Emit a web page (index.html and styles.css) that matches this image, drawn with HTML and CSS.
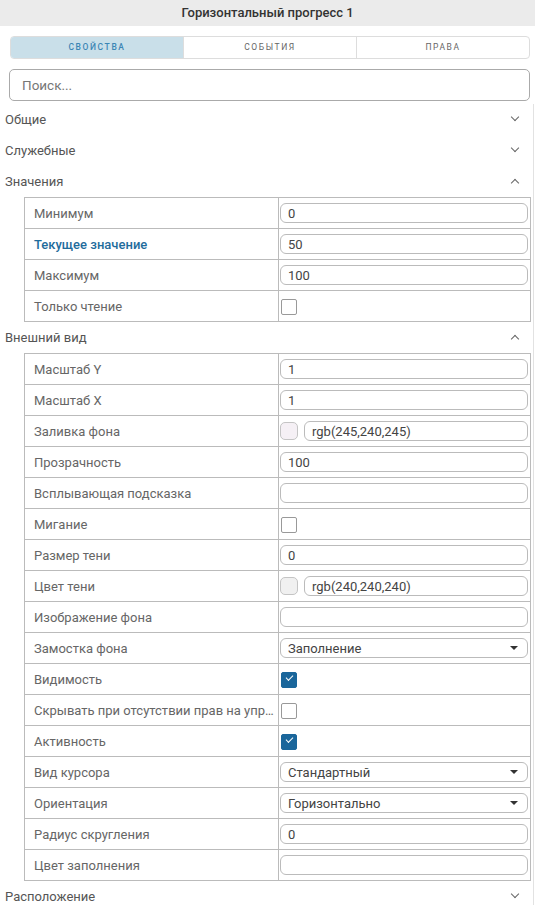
FILE: index.html
```html
<!DOCTYPE html>
<html lang="ru">
<head>
    <meta charset="UTF-8">
    <meta name="viewport" content="width=device-width, initial-scale=1.0">
    <title>Свойства</title>
    <link rel="stylesheet" href="styles.css">
</head>
<body>
    <div class="panel">
        <div class="panel-title">Горизонтальный прогресс 1</div>
        <div class="tabs">
            <div class="tab active">Свойства</div>
            <div class="tab">События</div>
            <div class="tab">Права</div>
        </div>
        <div class="search">
            <input type="text" placeholder="Поиск...">
        </div>
        <div class="groups">
            <div class="group-head">Общие <span class="chev down"></span></div>
            <div class="group-head">Служебные <span class="chev down"></span></div>
            <div class="group-head">Значения <span class="chev up"></span></div>
            <table class="props">
                <tr><td>Минимум</td><td><div class="field">0</div></td></tr>
                <tr><td class="accent">Текущее значение</td><td><div class="field">50</div></td></tr>
                <tr><td>Максимум</td><td><div class="field">100</div></td></tr>
                <tr><td>Только чтение</td><td><span class="check"></span></td></tr>
            </table>
            <div class="group-head">Внешний вид <span class="chev up"></span></div>
            <table class="props">
                <tr><td>Масштаб Y</td><td><div class="field">1</div></td></tr>
                <tr><td>Масштаб X</td><td><div class="field">1</div></td></tr>
                <tr><td>Заливка фона</td><td><div class="color"><span class="swatch swatch-bg"></span><div class="field">rgb(245,240,245)</div></div></td></tr>
                <tr><td>Прозрачность</td><td><div class="field">100</div></td></tr>
                <tr><td>Всплывающая подсказка</td><td><div class="field"></div></td></tr>
                <tr><td>Мигание</td><td><span class="check"></span></td></tr>
                <tr><td>Размер тени</td><td><div class="field">0</div></td></tr>
                <tr><td>Цвет тени</td><td><div class="color"><span class="swatch swatch-shadow"></span><div class="field">rgb(240,240,240)</div></div></td></tr>
                <tr><td>Изображение фона</td><td><div class="field"></div></td></tr>
                <tr><td>Замостка фона</td><td><div class="field select">Заполнение</div></td></tr>
                <tr><td>Видимость</td><td><span class="check on"></span></td></tr>
                <tr><td><span class="cut">Скрывать при отсутствии прав на управление</span></td><td><span class="check"></span></td></tr>
                <tr><td>Активность</td><td><span class="check on"></span></td></tr>
                <tr><td>Вид курсора</td><td><div class="field select">Стандартный</div></td></tr>
                <tr><td>Ориентация</td><td><div class="field select">Горизонтально</div></td></tr>
                <tr><td>Радиус скругления</td><td><div class="field">0</div></td></tr>
                <tr><td>Цвет заполнения</td><td><div class="field"></div></td></tr>
            </table>
            <div class="group-head">Расположение <span class="chev down"></span></div>
        </div>
    </div>
</body>
</html>
```

FILE: styles.css
```css
body {
    margin: 0;
    font-family: Roboto, "Liberation Sans", sans-serif;
    color: #555;
    background: #fff;
}
.panel {
    width: 535px;
}
.panel-title {
    height: 26px;
    line-height: 26px;
    background-color: #ebebeb;
    text-align: center;
    font-size: 13px;
    font-weight: 500;
    color: #333;
}
.tabs {
    display: flex;
    margin: 10px 5px 0 10px;
    height: 21px;
    border: 1px solid #ddd;
    border-radius: 4px;
    overflow: hidden;
}
.tab {
    flex: 1;
    line-height: 21px;
    text-align: center;
    font-size: 8.5px;
    letter-spacing: 1.6px;
    text-transform: uppercase;
    color: #666;
    border-left: 1px solid #ddd;
}
.tab:first-child {
    border-left: none;
}
.tab.active {
    background-color: #c9dfe9;
    color: #3c86b5;
    font-weight: 500;
}
.search {
    margin: 10px 5px 0 9px;
}
.search input {
    display: block;
    width: 100%;
    height: 32px;
    box-sizing: border-box;
    border: 1px solid #aaa;
    border-radius: 5px;
    padding: 0 12px;
    font-family: inherit;
    font-size: 13.5px;
    color: #333;
}
.search input::placeholder {
    color: #777;
}
.groups {
    margin-top: 3px;
    width: 533px;
    border-right: 1px solid #e2e2e2;
}
.group-head {
    position: relative;
    height: 31px;
    line-height: 31px;
    padding-left: 5px;
    font-size: 13px;
    color: #555;
}
.chev {
    position: absolute;
    right: 15px;
    width: 5px;
    height: 5px;
    border-right: 1.3px solid #666;
    border-bottom: 1.3px solid #666;
}
.chev.down {
    transform: rotate(45deg);
    top: 10px;
}
.chev.up {
    transform: rotate(-135deg);
    top: 14px;
}
.props {
    margin-left: 24px;
    width: 507px;
    border-collapse: collapse;
    table-layout: fixed;
}
.props td {
    height: 30px;
    padding: 0;
    border: 1px solid #bbb;
    font-size: 13px;
    color: #666;
}
.props td:first-child {
    width: 244px;
    padding-left: 9px;
}
.props td:last-child {
    padding: 0 2px 0 1px;
}
.props td.accent {
    color: #1f6c9c;
    font-weight: 500;
}
.cut {
    display: block;
    white-space: nowrap;
    overflow: hidden;
    text-overflow: ellipsis;
    padding-right: 3px;
}
.field {
    position: relative;
    height: 20px;
    line-height: 19px;
    box-sizing: border-box;
    border: 1px solid #bbb;
    border-radius: 6px;
    padding: 0 7px;
    font-size: 13px;
    color: #444;
}
.field.select::after {
    content: "";
    position: absolute;
    right: 9px;
    top: 7px;
    border-left: 4px solid transparent;
    border-right: 4px solid transparent;
    border-top: 4px solid #333;
}
.color {
    display: flex;
    align-items: center;
    gap: 6px;
}
.color .field {
    flex: 1;
}
.swatch {
    width: 18px;
    height: 18px;
    box-sizing: border-box;
    border: 1px solid #c4c4c4;
    border-radius: 5px;
}
.swatch-bg {
    background-color: rgb(245,240,245);
}
.swatch-shadow {
    background-color: rgb(240,240,240);
}
.check {
    display: block;
    width: 14px;
    height: 14px;
    margin-left: 1px;
    margin-top: 1px;
    border: 1.5px solid #999;
    border-radius: 2px;
    position: relative;
}
.check.on {
    background-color: #1a669b;
    border-color: #1a669b;
}
.check.on::after {
    content: "";
    position: absolute;
    left: 4px;
    top: 2px;
    width: 6px;
    height: 3px;
    border-left: 1.5px solid #fff;
    border-bottom: 1.5px solid #fff;
    transform: rotate(-45deg);
}
```
